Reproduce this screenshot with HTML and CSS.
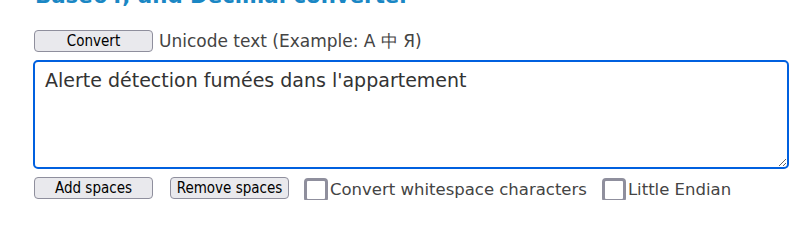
FILE: index.html
```html
<!DOCTYPE html>
<html>
<head>
<meta charset="utf-8">
<link rel="stylesheet" href="styles.css">
</head>
<body>
<div class="page">
  <h2 class="title"><span class="title-line">Unicode to Hex, UTF-8, UTF-16,</span><span class="title-line">Base64, and Decimal converter</span></h2>
  <div class="row top-row">
    <button class="btn">Convert</button>
    <span class="label">Unicode text (Example: A 中 Я)</span>
  </div>
  <textarea class="input">Alerte détection fumées dans l'appartement</textarea>
  <div class="row bottom-row">
    <button class="btn">Add spaces</button>
    <button class="btn btn-remove">Remove spaces</button>
    <label class="check"><span class="box"></span>Convert whitespace characters</label>
    <label class="check"><span class="box"></span>Little Endian</label>
  </div>
</div>
</body>
</html>
```
FILE: styles.css
```css
html, body {
  margin: 0;
  padding: 0;
  background: #fff;
}
.page {
  padding-left: 33px;
  font-family: "DejaVu Sans", Verdana, sans-serif;
  color: #444;
}
.title {
  margin: -46px 0 0 0;
  font-size: 21.3px;
  line-height: 28px;
  font-weight: bold;
  color: #1a87c4;
  white-space: nowrap;
  padding-left: 2px;
}
.title-line {
  display: block;
}
.row {
  display: flex;
  align-items: center;
}
.top-row {
  margin-top: 20px;
  gap: 6px;
  padding-left: 1px;
}
.btn {
  box-sizing: border-box;
  width: 119px;
  height: 22px;
  padding: 0;
  font-family: "DejaVu Sans Condensed", "DejaVu Sans", Tahoma, sans-serif;
  font-stretch: condensed;
  font-size: 15px;
  line-height: 18px;
  color: #000;
  background: #e9e9ed;
  border: 1px solid #8f8f9d;
  border-radius: 4px;
}
.label {
  font-size: 17px;
  line-height: 22px;
}
.input {
  display: block;
  box-sizing: border-box;
  width: 756px;
  height: 109px;
  margin-top: 8px;
  padding: 6px 10px;
  border: 2px solid #0060df;
  border-radius: 5px;
  font-family: "DejaVu Sans", Verdana, sans-serif;
  font-size: 19px;
  line-height: 24px;
  color: #333;
  resize: both;
  outline: none;
}
.bottom-row {
  margin-top: 7px;
  padding-left: 1px;
  gap: 0;
}
.btn-remove {
  margin-left: 17px;
}
.check {
  display: flex;
  align-items: center;
  font-size: 16.5px;
  line-height: 22px;
  margin-left: 15px;
  position: relative;
  top: 2px;
}
.box {
  box-sizing: border-box;
  width: 24px;
  height: 24px;
  border: 3px solid #8f8f9d;
  border-radius: 4px;
  margin-right: 2px;
  background: #fff;
}
```
